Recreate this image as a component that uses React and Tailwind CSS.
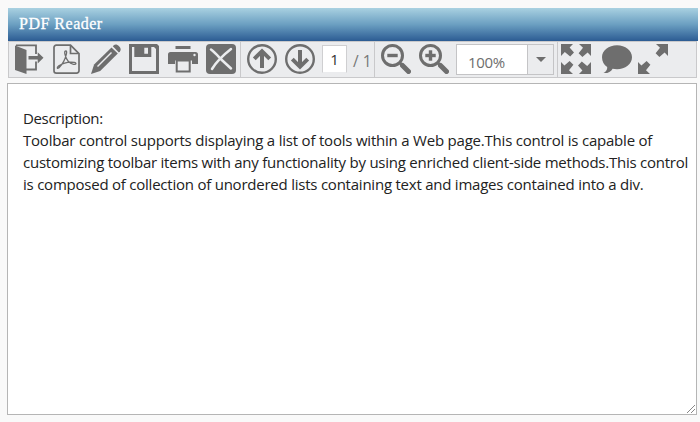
const Icon = ({ className = '', children }) => (
  <svg viewBox="0 0 30 30" className={`h-[30px] w-[30px] shrink-0 ${className}`} fill="#6e6e6e" aria-hidden="true">
    {children}
  </svg>
);

const line = { fill: 'none', stroke: '#6e6e6e' };

const Separator = ({ className = '' }) => <div className={`w-px shrink-0 self-stretch bg-[#c9c9cb] ${className}`} />;

const ArrowCircle = ({ down, className }) => (
  <Icon className={className}>
    <g {...line} transform={down ? 'rotate(180 15 15)' : undefined}>
      <circle cx="15" cy="15" r="13.8" strokeWidth="2.4" />
      <path d="M15 24V8M7.3 14.8 15 7.2l7.7 7.6" strokeWidth="4" />
    </g>
  </Icon>
);

const Magnifier = ({ plus, className }) => (
  <Icon className={className}>
    <g {...line}>
      <circle cx="11.5" cy="11.5" r="10" strokeWidth="3" />
      <path d="M6.3 11.5h10.4" strokeWidth="3.4" />
      {plus && <path d="M11.5 6.3v10.4" strokeWidth="3.4" />}
      <path d="m18.5 18.5 3 3" strokeWidth="3" />
      <path d="m21.5 21.5 6 6" strokeWidth="5" strokeLinecap="round" />
    </g>
  </Icon>
);

const CornerArrow = ({ angle }) => (
  <path transform={`rotate(${angle} 15 15)`} d="M0 0h12L8.600 3.400l4.400 5.200-3.800 3.800-5.400-4.400L0 12z" />
);

export default function App() {
  return (
    <div className="h-[422px] w-[700px] overflow-hidden bg-[#f9f9f9] pt-[8px] pl-[7px]">
      <header className="ml-px flex h-[33px] w-[690px] items-center bg-linear-to-b from-[#a9d1e1] via-[#6b9fc1] to-[#2c5c93] pb-px pl-[11px]">
        <h1 className="font-['Liberation_Serif',serif] text-[16px] leading-none tracking-[0.5px] text-white [-webkit-text-stroke:0.3px_white]">PDF Reader</h1>
      </header>

      <div className="ml-px flex h-[37px] w-[689px] items-start border border-[#c9c9cb] bg-[#ebecee] pl-[6px]">
        <Icon className="mt-[2px]">
          <path d="M0 1.500 11.500 6v24L0 26z" />
          <path d="M1 1.400h20v8.600M21 17.500v8H11" {...line} strokeWidth="1.8" />
          <path d="M13.500 12h9.200V8.200l5.800 5.600-5.800 5.600v-3.800h-9.200z" />
        </Icon>
        <Icon className="mt-[2px] ml-[7px]">
          <g {...line}>
            <path d="M4.200 1.200h14.300l8.500 8.500v17a2.400 2.400 0 0 1-2.400 2.400H4.400A2.400 2.400 0 0 1 2 26.700V3.400a2.200 2.200 0 0 1 2.200-2.200z" strokeWidth="1.700" />
            <path d="M18.500 1.500v8h8" strokeWidth="1.7" />
            <path d="M14 7c-1.700-.2-1.400 2.200-.8 4.100 1.100 4.200 3.700 8.200 8.300 9.200 2.800.6 3.300-1.500.8-1.900-5.300-.8-10.800.4-15.500 3.500-2.700 1.900-1.400 3.500.6 1.400 3.300-3.600 5.900-8.500 6.900-13C14.700 8.800 14.900 7.100 14 7z" strokeWidth="1.300" />
          </g>
        </Icon>
        <Icon className="mt-[2px] ml-[9px]">
          <path d="m20.500 3.500 6.300 6L9.200 27 0 30l3.100-9.500z" />
          <path d="m21.800 2.300 1.300-1.200c2.700-2.400 8.400 3.200 6 6.100l-1.200 1.200z" />
          <path d="M6.500 22.500 20.500 8.500" fill="none" stroke="#ebecee" strokeWidth="1.500" />
        </Icon>
        <Icon className="mt-[2px] ml-[8px]">
          <path d="M0 0h28l2 2v28H0z" />
          <path d="M3 3h2.300v10h17V3H25l2 2v22H3zM15.300 3.800h3.700v6h-3.700z" fill="#ebecee" />
        </Icon>
        <Icon className="mt-[2px] ml-[9px]">
          <path d="M7.500 2h15v3h-15zM2.500 8h25a2.500 2.500 0 0 1 2.500 2.500V20h-6v-3.500H7V20H0v-9.500A2.500 2.500 0 0 1 2.500 8z" />
          <circle cx="26.500" cy="11" r="1.200" fill="#ebecee" />
          <path d="M8.700 16.500h13v11h-13z" fill="#ebecee" stroke="#6e6e6e" strokeWidth="2" />
        </Icon>
        <Icon className="mt-[2px] ml-[8px]">
          <rect width="30" height="30" rx="4" />
          <path d="M5 5.500c3.500 2.500 6.500 6 10.300 10L25 24.500M25 5C18 10.500 11 16.500 6 25" fill="none" stroke="#ebecee" strokeWidth="2.500" strokeLinecap="round" />
        </Icon>
        <Separator className="ml-[4px]" />
        <ArrowCircle className="mt-[2px] ml-[6px]" />
        <ArrowCircle down className="mt-[2px] ml-[8px]" />
        <input aria-label="Page" defaultValue="1" className="mt-[3px] ml-[7px] h-[28px] w-[25px] shrink-0 border border-[#cfcfd1] border-b-[#ebecee] bg-white text-center font-['Open_Sans',sans-serif] text-[15px] text-[#333] outline-none" />
        <span className="mt-[8px] ml-[6px] w-[22px] shrink-0 font-['Open_Sans',sans-serif] text-[15.500px] leading-[22px] whitespace-nowrap text-[#777]">/ 1</span>
        <Separator className="-ml-px mr-px" />
        <Magnifier className="mt-[2px] ml-[5px]" />
        <Magnifier plus className="mt-[2px] ml-[8px]" />
        <div className="mt-[2px] ml-[7px] flex h-[31px] w-[98px] shrink-0 border border-[#c4c4c6] bg-white">
          <span className="flex-1 pt-[7px] pl-[11px] font-['Open_Sans',sans-serif] text-[15px] leading-[20px] tracking-[-0.3px] text-[#6e6e6e]">100%</span>
          <button aria-label="Zoom level" className="flex w-[26px] items-center justify-center border-l border-[#c4c4c6] bg-[#ebecee]">
            <svg viewBox="0 0 10 5" className="h-[5px] w-[10px]" fill="#6e6e6e"><path d="M0 0h10L5 5z" /></svg>
          </button>
        </div>
        <Separator className="ml-[3px]" />
        <Icon className="mt-[2px] ml-[3px]">
          <CornerArrow angle={0} />
          <CornerArrow angle={90} />
          <CornerArrow angle={180} />
          <CornerArrow angle={270} />
        </Icon>
        <Icon className="mt-[2px] ml-[11px]">
          <path d="M15 1.200c8.300 0 15 5.200 15 12s-6.700 12-15 12c-1.500 0-3-.2-4.400-.5C8.800 28 5 29.600 1.500 29c2.400-1.200 4-3.300 3.700-6C2 20.800 0 17.400 0 13.200c0-6.800 6.700-12 15-12z" />
        </Icon>
        <Icon className="mt-[2px] ml-[6px]">
          <CornerArrow angle={90} />
          <CornerArrow angle={270} />
        </Icon>
      </div>

      <main className="relative mt-[5px] h-[332px] w-[690px] border border-[#b5b5b5] bg-white pt-[23px] pl-[15px] font-['Open_Sans',sans-serif] text-[15px] leading-[22px] whitespace-nowrap text-[#222]">
        <p className="tracking-[-0.36px]">Description:</p>
        <p className="tracking-[-0.21px]">Toolbar control supports displaying a list of tools within a Web page.This control is capable of</p>
        <p className="tracking-[-0.24px]">customizing toolbar items with any functionality by using enriched client-side methods.This control</p>
        <p className="tracking-[-0.23px]">is composed of collection of unordered lists containing text and images contained into a div.</p>
        <svg viewBox="0 0 8 8" className="absolute right-px bottom-px h-[8px] w-[8px]" fill="none" stroke="#888" strokeWidth="1"><path d="m0 8 8-8M4 8l4-4" /></svg>
      </main>
    </div>
  );
}
